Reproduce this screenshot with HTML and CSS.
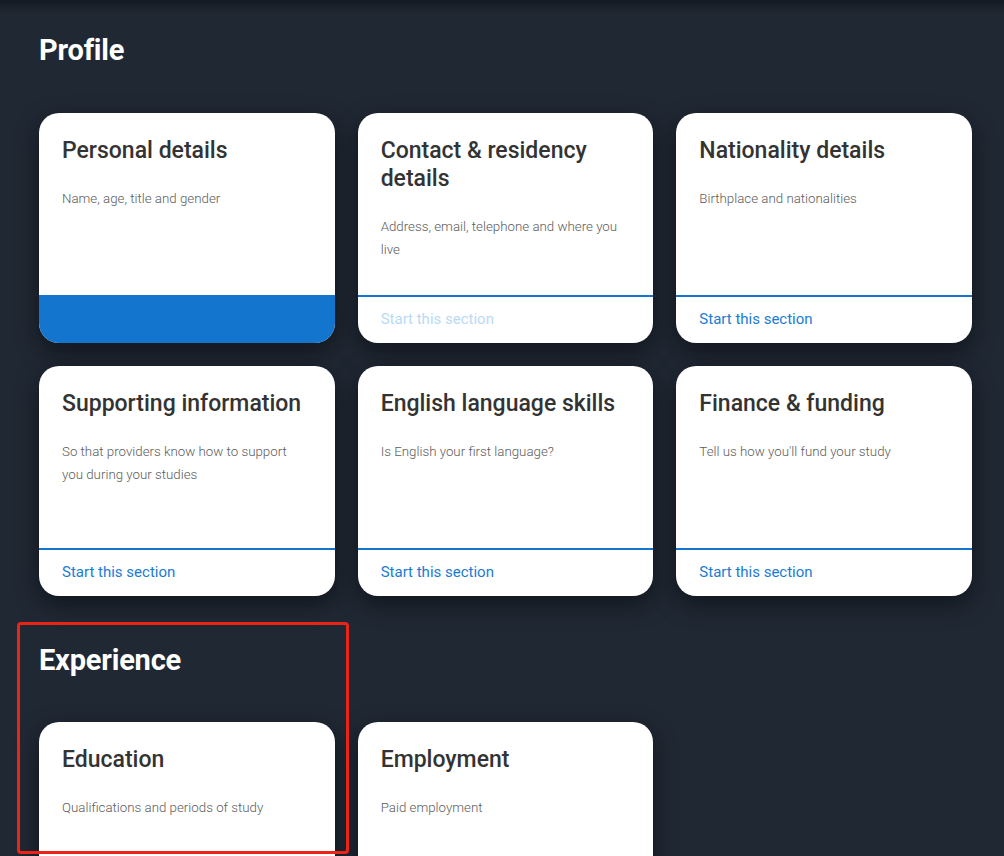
FILE: index.html
```html
<!DOCTYPE html>
<html lang="en">
<head>
<meta charset="utf-8">
<title>Profile</title>
<link rel="stylesheet" href="styles.css">
</head>
<body>
<div class="topshade"></div>
<main class="page">
  <section class="section">
    <h2 class="section-title">Profile</h2>
    <div class="grid">
      <article class="card">
        <div class="card-body">
          <h3 class="card-title">Personal details</h3>
          <p class="card-desc">Name, age, title and gender</p>
        </div>
        <div class="card-foot card-foot-active"></div>
      </article>
      <article class="card">
        <div class="card-body">
          <h3 class="card-title">Contact &amp; residency details</h3>
          <p class="card-desc">Address, email, telephone and where you live</p>
        </div>
        <div class="card-foot"><a class="card-link card-link-faded" href="#">Start this section</a></div>
      </article>
      <article class="card">
        <div class="card-body">
          <h3 class="card-title">Nationality details</h3>
          <p class="card-desc">Birthplace and nationalities</p>
        </div>
        <div class="card-foot"><a class="card-link" href="#">Start this section</a></div>
      </article>
      <article class="card">
        <div class="card-body">
          <h3 class="card-title">Supporting information</h3>
          <p class="card-desc">So that providers know how to support you during your studies</p>
        </div>
        <div class="card-foot"><a class="card-link" href="#">Start this section</a></div>
      </article>
      <article class="card">
        <div class="card-body">
          <h3 class="card-title">English language skills</h3>
          <p class="card-desc">Is English your first language?</p>
        </div>
        <div class="card-foot"><a class="card-link" href="#">Start this section</a></div>
      </article>
      <article class="card">
        <div class="card-body">
          <h3 class="card-title">Finance &amp; funding</h3>
          <p class="card-desc">Tell us how you'll fund your study</p>
        </div>
        <div class="card-foot"><a class="card-link" href="#">Start this section</a></div>
      </article>
    </div>
  </section>
  <section class="section section-exp">
    <div class="highlight"></div>
    <h2 class="section-title">Experience</h2>
    <div class="grid">
      <article class="card">
        <div class="card-body">
          <h3 class="card-title">Education</h3>
          <p class="card-desc">Qualifications and periods of study</p>
        </div>
        <div class="card-foot"><a class="card-link" href="#">Start this section</a></div>
      </article>
      <article class="card">
        <div class="card-body">
          <h3 class="card-title">Employment</h3>
          <p class="card-desc">Paid employment</p>
        </div>
        <div class="card-foot"><a class="card-link" href="#">Start this section</a></div>
      </article>
    </div>
  </section>
</main>
</body>
</html>
```
FILE: styles.css
```css
html, body {
  margin: 0;
  padding: 0;
}
body {
  background: #202833;
  font-family: Roboto, "Liberation Sans", Arial, sans-serif;
  height: 856px;
  overflow: hidden;
}
.topshade {
  position: absolute;
  left: 0;
  right: 0;
  top: 0;
  height: 14px;
  background: linear-gradient(to bottom, rgba(10, 14, 20, 0.55), rgba(10, 14, 20, 0));
  pointer-events: none;
}
.page {
  width: 933px;
  padding: 33px 0 0 39px;
}
.section {
  position: relative;
}
.section-exp {
  margin-top: 47px;
}
.section-title {
  margin: 0 0 46px 0;
  font-size: 29px;
  line-height: 34px;
  font-weight: 700;
  color: #ffffff;
  letter-spacing: -0.2px;
}
.section-exp .section-title {
  margin-bottom: 45px;
}
.grid {
  display: grid;
  grid-template-columns: repeat(3, 1fr);
  gap: 23px;
}
.card {
  background: #ffffff;
  border-radius: 20px;
  height: 230px;
  display: flex;
  flex-direction: column;
  overflow: hidden;
  box-shadow: 0 8px 22px rgba(5, 8, 12, 0.55);
}
.card-body {
  flex: 1;
  padding: 24px 22px 0 23px;
}
.card-title {
  margin: 0;
  font-size: 23px;
  line-height: 28px;
  font-weight: 500;
  color: #333333;
}
.card-desc {
  margin: 23px 0 0 0;
  padding-right: 6px;
  font-size: 13.3px;
  line-height: 22.5px;
  font-weight: 300;
  color: #5c5c5c;
}
.card-foot {
  border-top: 2px solid #1475cf;
  padding: 0 22px 3px 23px;
  box-sizing: border-box;
  height: 48px;
  display: flex;
  align-items: center;
}
.card-foot-active {
  background: #1475cf;
}
.card-link {
  font-size: 15px;
  color: #1a7bd4;
  text-decoration: none;
}
.card-link-faded {
  color: #b9daf4;
}
.highlight {
  position: absolute;
  left: -22px;
  top: -21px;
  width: 326px;
  height: 226px;
  border: 3px solid #ec2418;
  border-radius: 4px;
  pointer-events: none;
  z-index: 2;
}
```
